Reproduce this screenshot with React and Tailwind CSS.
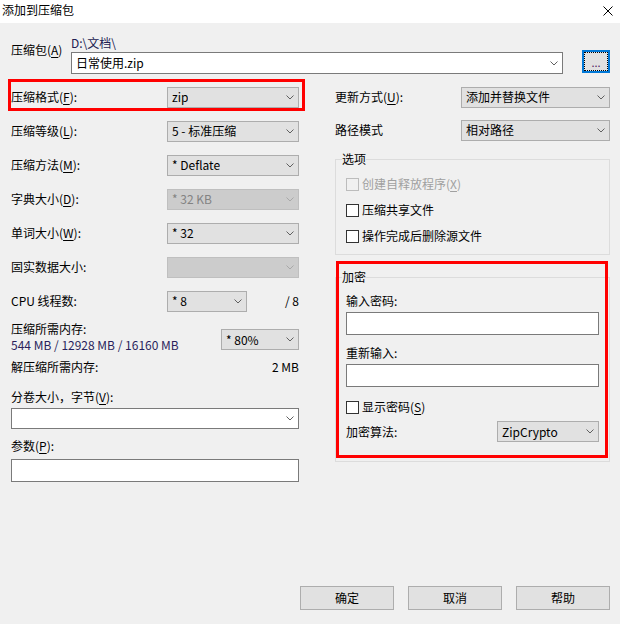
import React from "react";

// Underlined access-key letter, as in Windows dialog labels
const K = ({ children }) => (
  <span className="underline underline-offset-[2px] decoration-[1px]">{children}</span>
);

const Chevron = ({ color = "#606060" }) => (
  <svg width="8" height="5" viewBox="0 0 8 5" className="shrink-0">
    <path d="M0.5 0.5 L4 4 L7.5 0.5" fill="none" stroke={color} strokeWidth="1" />
  </svg>
);

const comboStyles = {
  gray: "bg-[#e1e1e1] border-[#adadad] text-black",
  white: "bg-white border-[#7a7a7a] text-black",
  disabled: "bg-[#cccccc] border-[#bfbfbf] text-[#838383]",
};

function Combo({ text = "", variant = "gray", className = "" }) {
  return (
    <div
      className={`flex items-center justify-between border pl-[4px] pr-[4px] shrink-0 ${comboStyles[variant]} ${className}`}
    >
      <span className="truncate leading-[16px]">{text}</span>
      <Chevron color={variant === "disabled" ? "#a8a8a8" : "#606060"} />
    </div>
  );
}

function CheckBox({ label, disabled = false }) {
  return (
    <div className="flex items-center h-[16px]">
      <div
        className={`w-[13px] h-[13px] border shrink-0 ${
          disabled ? "border-[#bcbcbc] bg-[#f0f0f0]" : "border-[#333333] bg-white"
        }`}
      />
      <span className={`ml-[3px] leading-[16px] ${disabled ? "text-[#a0a0a0]" : "text-black"}`}>
        {label}
      </span>
    </div>
  );
}

function Row({ label, children, className = "h-[34px]" }) {
  return (
    <div className={`flex items-center justify-between ${className}`}>
      <span className="leading-[16px]">{label}</span>
      {children}
    </div>
  );
}

export default function App() {
  return (
    <div className="w-[620px] h-[624px] bg-[#f0f0f0] flex flex-col text-[12px] leading-[16px] text-black font-['Noto_Sans_CJK_SC','Noto_Sans',sans-serif] overflow-hidden">
      {/* Title bar */}
      <div className="h-[23px] bg-white flex items-center justify-between pl-[2px] pr-[7px] shrink-0">
        <span className="-mt-[3px]">添加到压缩包</span>
        <svg width="10" height="10" viewBox="0 0 10 10" className="-mt-[2px]">
          <path d="M0.5 0.5 L9.5 9.5 M9.5 0.5 L0.5 9.5" stroke="#000" strokeWidth="1" />
        </svg>
      </div>

      {/* Archive path */}
      <div className="flex pl-[11px] h-[57px] shrink-0">
        <div className="w-[60px] pt-[19px]">
          压缩包(<K>A</K>)
        </div>
        <div className="flex flex-col pt-[13px]">
          <div className="h-[14px] leading-[14px] text-[#202050]">D:\文档\</div>
          <div className="flex items-start">
            <Combo variant="white" text="日常使用.zip" className="mt-[2px] w-[492px] h-[22px]" />
            <div className="ml-[19px] w-[28px] h-[23px] border-2 border-[#0078d7] bg-[#e1e1e1] flex">
              <div className="flex-1 border border-dotted border-black flex items-center justify-center">
                <span className="text-[11px] leading-[11px] text-[#502060] mt-[2px]">...</span>
              </div>
            </div>
          </div>
        </div>
      </div>

      {/* Main two-column area */}
      <div className="flex pl-[11px] shrink-0">
        {/* Left column */}
        <div className="w-[288px] flex flex-col">
          <div className="relative">
            <Row label={<>压缩格式(<K>F</K>):</>}>
              <Combo text="zip" className="w-[132px] h-[21px]" />
            </Row>
            <div className="absolute -left-[3px] -top-[1px] w-[297px] h-[32px] border-[3px] border-[#ff0000]" />
          </div>
          <Row label={<>压缩等级(<K>L</K>):</>}>
            <Combo text="5 - 标准压缩" className="w-[132px] h-[21px]" />
          </Row>
          <Row label={<>压缩方法(<K>M</K>):</>}>
            <Combo text="*  Deflate" className="w-[132px] h-[21px] whitespace-pre" />
          </Row>
          <Row label={<>字典大小(<K>D</K>):</>}>
            <Combo variant="disabled" text="*  32 KB" className="w-[132px] h-[21px] whitespace-pre" />
          </Row>
          <Row label={<>单词大小(<K>W</K>):</>}>
            <Combo text="*  32" className="w-[132px] h-[21px] whitespace-pre" />
          </Row>
          <Row label="固实数据大小:">
            <Combo variant="disabled" text="" className="w-[132px] h-[21px]" />
          </Row>
          <div className="flex items-center h-[34px]">
            <span className="w-[156px]">CPU 线程数:</span>
            <Combo text="*  8" className="w-[80px] h-[21px] whitespace-pre" />
            <span className="ml-auto">/ 8</span>
          </div>

          {/* Memory usage */}
          <div className="flex justify-between items-start h-[38px]">
            <div className="pt-[3px] flex flex-col">
              <span>压缩所需内存:</span>
              <span className="text-[#2a1f5c]">544 MB / 12928 MB / 16160 MB</span>
            </div>
            <Combo text="* 80%" className="mt-[11px] w-[78px] h-[21px]" />
          </div>
          <div className="flex justify-between mt-[3px] h-[16px]">
            <span>解压缩所需内存:</span>
            <span>2 MB</span>
          </div>

          <div className="mt-[14px] h-[16px]">
            分卷大小，字节(<K>V</K>):
          </div>
          <Combo variant="white" text="" className="mt-[3px] w-full h-[21px]" />

          <div className="mt-[9px] h-[16px]">
            参数(<K>P</K>):
          </div>
          <div className="mt-[5px] h-[23px] w-full bg-white border border-[#7a7a7a]" />
        </div>

        {/* Right column */}
        <div className="ml-[36px] w-[275px] flex flex-col">
          <Row label={<>更新方式(<K>U</K>):</>}>
            <Combo text="添加并替换文件" className="w-[149px] h-[21px]" />
          </Row>
          <Row label="路径模式" className="h-[32px]">
            <Combo text="相对路径" className="w-[149px] h-[21px]" />
          </Row>

          {/* Options group */}
          <fieldset className="mt-[5px] border border-[#dcdcdc] pl-[10px] pr-[10px] pt-[4px] pb-[5px]">
            <legend className="-ml-[4px] leading-[16px]">选项</legend>
            <div className="flex flex-col">
              <div className="h-[26px] flex items-center">
                <CheckBox disabled label={<>创建自释放程序(<K>X</K>)</>} />
              </div>
              <div className="h-[26px] flex items-center">
                <CheckBox label="压缩共享文件" />
              </div>
              <div className="h-[26px] flex items-center">
                <CheckBox label="操作完成后删除源文件" />
              </div>
            </div>
          </fieldset>

          {/* Encryption group */}
          <div className="relative mt-[14px]">
            <fieldset className="border border-[#dcdcdc] pl-[10px] pr-[10px] pb-[19px]">
              <legend className="-ml-[4px] leading-[16px]">加密</legend>
              <div className="flex flex-col">
                <div className="mt-[8px] h-[16px]">输入密码:</div>
                <div className="mt-[3px] h-[23px] w-full bg-white border border-[#7a7a7a]" />
                <div className="mt-[10px] h-[16px]">重新输入:</div>
                <div className="mt-[3px] h-[23px] w-full bg-white border border-[#7a7a7a]" />
                <div className="mt-[12px]">
                  <CheckBox label={<>显示密码(<K>S</K>)</>} />
                </div>
                <div className="mt-[6px] h-[21px] flex items-center justify-between">
                  <span>加密算法:</span>
                  <Combo text="ZipCrypto" className="w-[102px] h-[21px]" />
                </div>
              </div>
            </fieldset>
            <div className="absolute left-[1px] -top-[8px] w-[272px] h-[197px] border-[3px] border-[#ff0000] pointer-events-none" />
          </div>
        </div>
      </div>

      {/* Dialog buttons */}
      <div className="mt-auto flex justify-end gap-[14px] pr-[10px] pb-[14px] shrink-0">
        {["确定", "取消", "帮助"].map((t) => (
          <div
            key={t}
            className="w-[94px] h-[24px] border border-[#adadad] bg-[#e1e1e1] flex items-center justify-center"
          >
            {t}
          </div>
        ))}
      </div>
    </div>
  );
}
